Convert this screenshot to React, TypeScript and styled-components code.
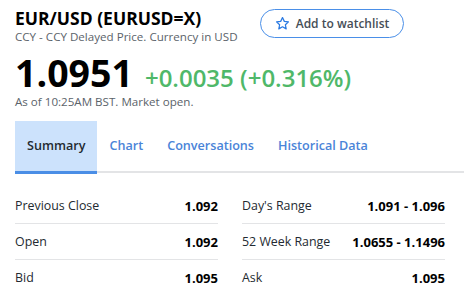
import React from "react";
import styled, { createGlobalStyle } from "styled-components";

const Global = createGlobalStyle`
  html, body { margin: 0; padding: 0; background: #fff; }
  body { font-family: "Open Sans", "Liberation Sans", sans-serif; color: #000; }
`;

const Page = styled.div`
  width: 464px;
  height: 296px;
  overflow: hidden;
  box-sizing: border-box;
  padding: 7px 0 0 15px;
`;

const Header = styled.div`
  display: flex;
  justify-content: space-between;
  align-items: flex-start;
  padding-right: 60px;
`;

const TitleBlock = styled.div`
  display: flex;
  flex-direction: column;
`;

const Title = styled.h1`
  margin: 0;
  font-size: 17.5px;
  line-height: 22px;
  font-weight: 700;
  color: #000;
`;

const Sub = styled.div`
  font-size: 11.6px;
  line-height: 16px;
  color: #5b636a;
`;

const WatchButton = styled.button`
  display: flex;
  align-items: center;
  justify-content: center;
  gap: 6px;
  width: 144px;
  height: 29px;
  margin-top: 2px;
  padding: 0;
  border: 1px solid #4a8fe8;
  border-radius: 15px;
  background: #fff;
  font-family: inherit;
  font-size: 12px;
  font-weight: 600;
  color: #464e56;
`;

const QuoteRow = styled.div`
  display: flex;
  align-items: baseline;
  gap: 12px;
  margin-top: 13px;
`;

const Price = styled.span`
  font-size: 37.5px;
  line-height: 30px;
  font-weight: 700;
  color: #000;
`;

const Change = styled.span`
  font-size: 24px;
  line-height: 28px;
  font-weight: 600;
  color: #4fb869;
`;

const AsOf = styled.div`
  margin-top: 3px;
  font-size: 11.6px;
  line-height: 14px;
  color: #5b636a;
`;

const Tabs = styled.nav`
  display: flex;
  margin-top: 12px;
  border-bottom: 2px solid #e3e4e6;
  height: 50px;
`;

const Tab = styled.div<{ $active?: boolean }>`
  display: flex;
  align-items: center;
  padding: 0 12px 2px;
  margin-bottom: -3px;
  font-size: 12.6px;
  font-weight: 600;
  color: ${(p) => (p.$active ? "#232a31" : "#4a84d8")};
  background: ${(p) => (p.$active ? "#cce2fc" : "transparent")};
  border-bottom: 3px solid ${(p) => (p.$active ? "#4a8ee6" : "transparent")};
`;

const Stats = styled.div`
  display: grid;
  grid-template-columns: 203px 203px;
  column-gap: 24px;
  margin-top: 15px;
`;

const Col = styled.div`
  display: flex;
  flex-direction: column;
`;

const Row = styled.div<{ $last?: boolean }>`
  display: flex;
  justify-content: space-between;
  align-items: center;
  height: 35px;
  border-bottom: 1px solid ${(p) => (p.$last ? "transparent" : "#e3e4e6")};
`;

const Label = styled.span`
  font-size: 12.4px;
  color: #232a31;
`;

const Value = styled.span`
  font-size: 13px;
  font-weight: 700;
  color: #000;
`;

const Star = () => (
  <svg width="15" height="15" viewBox="0 0 24 24" fill="none" stroke="#2a7ae2" strokeWidth="2" strokeLinejoin="round">
    <path d="M12 2.5l2.9 6.1 6.6.8-4.9 4.6 1.3 6.6L12 17.3l-5.9 3.3 1.3-6.6-4.9-4.6 6.6-.8z" />
  </svg>
);

const left = [
  ["Previous Close", "1.092"],
  ["Open", "1.092"],
  ["Bid", "1.095"],
];
const right = [
  ["Day's Range", "1.091 - 1.096"],
  ["52 Week Range", "1.0655 - 1.1496"],
  ["Ask", "1.095"],
];

export default function App() {
  return (
    <Page>
      <Global />
      <Header>
        <TitleBlock>
          <Title>EUR/USD (EURUSD=X)</Title>
          <Sub>CCY - CCY Delayed Price. Currency in USD</Sub>
        </TitleBlock>
        <WatchButton>
          <Star />
          Add to watchlist
        </WatchButton>
      </Header>
      <QuoteRow>
        <Price>1.0951</Price>
        <Change>+0.0035 (+0.316%)</Change>
      </QuoteRow>
      <AsOf>As of 10:25AM BST. Market open.</AsOf>
      <Tabs>
        <Tab $active>Summary</Tab>
        <Tab>Chart</Tab>
        <Tab>Conversations</Tab>
        <Tab>Historical Data</Tab>
      </Tabs>
      <Stats>
        <Col>
          {left.map(([l, v], i) => (
            <Row key={l} $last={i === left.length - 1}>
              <Label>{l}</Label>
              <Value>{v}</Value>
            </Row>
          ))}
        </Col>
        <Col>
          {right.map(([l, v], i) => (
            <Row key={l} $last={i === right.length - 1}>
              <Label>{l}</Label>
              <Value>{v}</Value>
            </Row>
          ))}
        </Col>
      </Stats>
    </Page>
  );
}
